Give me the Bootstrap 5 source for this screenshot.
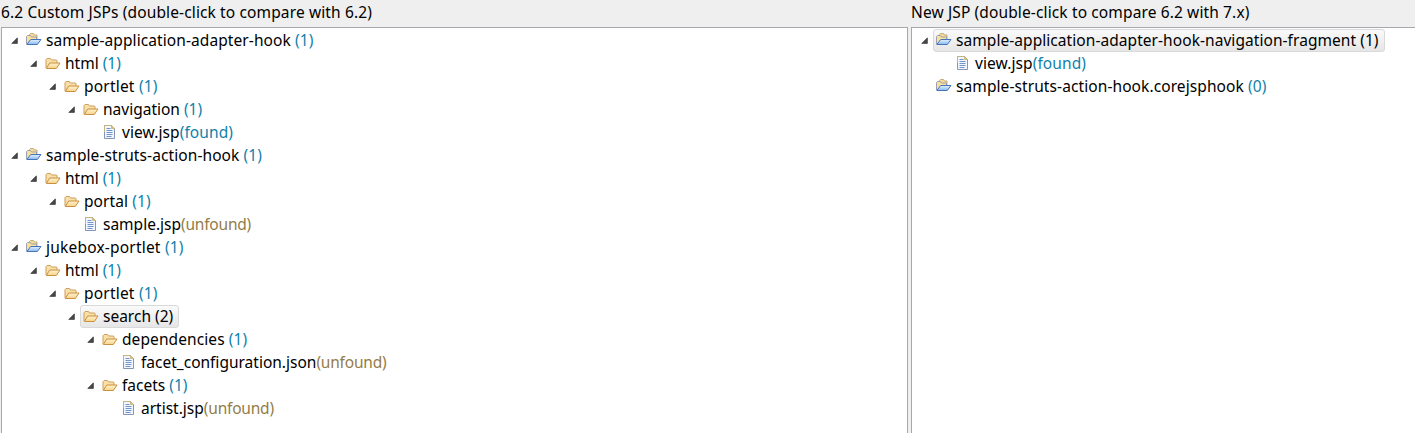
<!DOCTYPE html>
<html lang="en">
<head>
<meta charset="utf-8">
<title>Custom JSP</title>
<link href="https://cdn.jsdelivr.net/npm/bootstrap@5.3.0/dist/css/bootstrap.min.css" rel="stylesheet">
<style>
body{background:#efefef;color:#000;font:15.5px/23px "Noto Sans","Open Sans",sans-serif;height:433px}
.pane-left{width:907px;margin-left:1px;margin-right:3px}
.pane-title{height:27px;line-height:25px;letter-spacing:.125px}
.tree-box{background:#fff;border:1px solid #a5a8ad;border-bottom:0;padding-top:1px}
.pane-right .tree-box{border-right:0}
.tree-row{height:23px;padding-left:calc(9px + 19px * var(--lv,0))}
.l1{--lv:1}.l2{--lv:2}.l3{--lv:3}.l4{--lv:4}.l5{--lv:5}
.arrow{width:7px;height:7px;margin-right:5px}
.entry{height:23px;padding:0 5px 0 2px;border:1px solid transparent;border-radius:3px;line-height:21px}
.entry.sel{border-color:#d9d9d9;background:linear-gradient(#fafafa,#e6e6e6)}
.ico{width:16px;height:16px;margin:-1px 4px 0 0}
.wide{letter-spacing:.09px}
.cnt{color:#0f82ab}.unf{color:#937c48;letter-spacing:-.2px}
</style>
</head>
<body class="d-flex overflow-hidden">
<svg class="position-absolute" width="0" height="0">
<defs>
<linearGradient id="gy" x2="0" y2="1"><stop stop-color="#fff3cf"/><stop offset="1" stop-color="#f8d388"/></linearGradient>
<linearGradient id="gb" x2="0" y2="1"><stop stop-color="#e3f2ff"/><stop offset="1" stop-color="#86b8f0"/></linearGradient>
</defs>
<symbol id="arrow" viewBox="0 0 7 7"><path d="M6.400 .8v5.600H.8z" fill="#484848" stroke="#262626" stroke-width=".6"/></symbol>
<symbol id="folder" viewBox="0 0 16 16"><path d="M1 13V4.700l1-1.200h3.500l1 1.500h5l.5 .8V8" fill="#f9dfa8" stroke="#cf9f5c"/><path d="M1.300 13.500l3.400-5.500h10.300l-3.700 5.500z" fill="url(#gy)" stroke="#c98f42" stroke-linejoin="round"/></symbol>
<symbol id="root" viewBox="0 0 16 16"><path d="M3.500 5V2.500l1-1h3l1 1.500h2.500V7" fill="#f8dc96" stroke="#c0ad80"/><path d="M.5 12V4.500l1-1h3l1 1.500h5V8" fill="#fae09a" stroke="#9aa0b0"/><path d="M.8 12.500l3.900-5h10.300l-3.700 5z" fill="url(#gb)" stroke="#4674ba" stroke-linejoin="round"/></symbol>
<symbol id="file" viewBox="0 0 16 16"><path d="M2.500 1.500h7l3 3v10h-10z" fill="#f2f7ff" stroke="#8795b5"/><path d="M2.500 8V1.500h7l3 3" fill="none" stroke="#c3b482"/><path d="M9.500 1.500v3h3z" fill="#e0c77d" stroke="#c3ae70" stroke-width=".7"/><path d="M4.500 4.500h4M4.500 6.500h6M4.500 8.500h6M4.500 10.500h6M4.500 12.500h5" stroke="#7394c8"/></symbol>
</svg>

<section class="pane-left flex-shrink-0 d-flex flex-column">
<div class="pane-title">6.2 Custom JSPs (double-click to compare with 6.2)</div>
<div class="tree-box flex-grow-1">
<div class="tree-row d-flex align-items-center"><svg class="arrow"><use href="#arrow"/></svg><div class="entry d-flex align-items-center"><svg class="ico"><use href="#root"/></svg><span class="text-nowrap wide">sample-application-adapter-hook <span class="cnt">(1)</span></span></div></div>
<div class="tree-row l1 d-flex align-items-center"><svg class="arrow"><use href="#arrow"/></svg><div class="entry d-flex align-items-center"><svg class="ico"><use href="#folder"/></svg><span class="text-nowrap">html <span class="cnt">(1)</span></span></div></div>
<div class="tree-row l2 d-flex align-items-center"><svg class="arrow"><use href="#arrow"/></svg><div class="entry d-flex align-items-center"><svg class="ico"><use href="#folder"/></svg><span class="text-nowrap" style="letter-spacing:.2px">portlet <span class="cnt">(1)</span></span></div></div>
<div class="tree-row l3 d-flex align-items-center"><svg class="arrow"><use href="#arrow"/></svg><div class="entry d-flex align-items-center"><svg class="ico"><use href="#folder"/></svg><span class="text-nowrap">navigation <span class="cnt">(1)</span></span></div></div>
<div class="tree-row l4 d-flex align-items-center"><svg class="arrow invisible"></svg><div class="entry d-flex align-items-center"><svg class="ico"><use href="#file"/></svg><span class="text-nowrap wide">view.jsp<span class="cnt">(found)</span></span></div></div>
<div class="tree-row d-flex align-items-center"><svg class="arrow"><use href="#arrow"/></svg><div class="entry d-flex align-items-center"><svg class="ico"><use href="#root"/></svg><span class="text-nowrap wide">sample-struts-action-hook <span class="cnt">(1)</span></span></div></div>
<div class="tree-row l1 d-flex align-items-center"><svg class="arrow"><use href="#arrow"/></svg><div class="entry d-flex align-items-center"><svg class="ico"><use href="#folder"/></svg><span class="text-nowrap">html <span class="cnt">(1)</span></span></div></div>
<div class="tree-row l2 d-flex align-items-center"><svg class="arrow"><use href="#arrow"/></svg><div class="entry d-flex align-items-center"><svg class="ico"><use href="#folder"/></svg><span class="text-nowrap wide">portal <span class="cnt">(1)</span></span></div></div>
<div class="tree-row l3 d-flex align-items-center"><svg class="arrow invisible"></svg><div class="entry d-flex align-items-center"><svg class="ico"><use href="#file"/></svg><span class="text-nowrap">sample.jsp<span class="unf">(unfound)</span></span></div></div>
<div class="tree-row d-flex align-items-center"><svg class="arrow"><use href="#arrow"/></svg><div class="entry d-flex align-items-center"><svg class="ico"><use href="#root"/></svg><span class="text-nowrap" style="letter-spacing:.2px">jukebox-portlet <span class="cnt">(1)</span></span></div></div>
<div class="tree-row l1 d-flex align-items-center"><svg class="arrow"><use href="#arrow"/></svg><div class="entry d-flex align-items-center"><svg class="ico"><use href="#folder"/></svg><span class="text-nowrap">html <span class="cnt">(1)</span></span></div></div>
<div class="tree-row l2 d-flex align-items-center"><svg class="arrow"><use href="#arrow"/></svg><div class="entry d-flex align-items-center"><svg class="ico"><use href="#folder"/></svg><span class="text-nowrap" style="letter-spacing:.2px">portlet <span class="cnt">(1)</span></span></div></div>
<div class="tree-row l3 d-flex align-items-center"><svg class="arrow"><use href="#arrow"/></svg><div class="entry sel d-flex align-items-center"><svg class="ico"><use href="#folder"/></svg><span class="text-nowrap">search (2)</span></div></div>
<div class="tree-row l4 d-flex align-items-center"><svg class="arrow"><use href="#arrow"/></svg><div class="entry d-flex align-items-center"><svg class="ico"><use href="#folder"/></svg><span class="text-nowrap wide">dependencies <span class="cnt">(1)</span></span></div></div>
<div class="tree-row l5 d-flex align-items-center"><svg class="arrow invisible"></svg><div class="entry d-flex align-items-center"><svg class="ico"><use href="#file"/></svg><span class="text-nowrap">facet_configuration.json<span class="unf">(unfound)</span></span></div></div>
<div class="tree-row l4 d-flex align-items-center"><svg class="arrow"><use href="#arrow"/></svg><div class="entry d-flex align-items-center"><svg class="ico"><use href="#folder"/></svg><span class="text-nowrap">facets <span class="cnt">(1)</span></span></div></div>
<div class="tree-row l5 d-flex align-items-center"><svg class="arrow invisible"></svg><div class="entry d-flex align-items-center"><svg class="ico"><use href="#file"/></svg><span class="text-nowrap">artist.jsp<span class="unf">(unfound)</span></span></div></div>
</div>
</section>

<section class="pane-right flex-grow-1 d-flex flex-column">
<div class="pane-title">New JSP (double-click to compare 6.2 with 7.x)</div>
<div class="tree-box flex-grow-1">
<div class="tree-row d-flex align-items-center"><svg class="arrow"><use href="#arrow"/></svg><div class="entry sel d-flex align-items-center"><svg class="ico"><use href="#root"/></svg><span class="text-nowrap" style="letter-spacing:.06px">sample-application-adapter-hook-navigation-fragment (1)</span></div></div>
<div class="tree-row l1 d-flex align-items-center"><svg class="arrow invisible"></svg><div class="entry d-flex align-items-center"><svg class="ico"><use href="#file"/></svg><span class="text-nowrap wide">view.jsp<span class="cnt">(found)</span></span></div></div>
<div class="tree-row d-flex align-items-center"><svg class="arrow invisible"></svg><div class="entry d-flex align-items-center"><svg class="ico"><use href="#root"/></svg><span class="text-nowrap wide">sample-struts-action-hook.corejsphook <span class="cnt">(0)</span></span></div></div>
</div>
</section>
<script src="https://cdn.jsdelivr.net/npm/bootstrap@5.3.0/dist/js/bootstrap.bundle.min.js"></script>
</body>
</html>
